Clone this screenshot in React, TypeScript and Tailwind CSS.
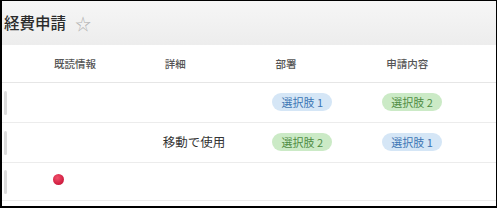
import React from "react";

const font = { fontFamily: '"Noto Sans CJK JP", "Noto Sans", sans-serif' };

function Badge({ color, label }: { color: "blue" | "green"; label: string }) {
  const cls =
    color === "blue"
      ? "bg-[#d5e6f6] text-[#3b75b3]"
      : "bg-[#cbeac6] text-[#4e8c43]";
  return (
    <span
      className={`inline-flex h-[18px] items-center rounded-full px-[9px] text-[11px] leading-none ${cls}`}
    >
      {label}
    </span>
  );
}

function Row({
  cells,
  last,
}: {
  cells: React.ReactNode[];
  last?: boolean;
}) {
  return (
    <div className={`flex items-center border-b border-[#ececec] ${last ? "h-[38px]" : "h-[40px]"}`}>
      <div className="flex w-[51px] items-center pl-[2px]">
        <div className="h-[24px] w-[3px] rounded-sm bg-[#dcdcdc]" />
      </div>
      {cells.map((c, i) => (
        <div key={i} className="flex w-[111px] items-center">
          {c}
        </div>
      ))}
    </div>
  );
}

export default function App() {
  return (
    <div
      className="box-border h-[208px] w-[497px] overflow-hidden border-b-2 border-l-2 border-r border-t border-black bg-white"
      style={font}
    >
      <div className="flex h-[44px] items-center bg-gradient-to-b from-[#f6f6f6] to-[#ededed] pl-[2px]">
        <span className="text-[15.5px] font-medium leading-none text-[#2b2b2b]">経費申請</span>
        <span className="ml-[9px] text-[16px] leading-none text-[#b4b4b4]">☆</span>
      </div>
      <div className="flex h-[38px] items-center border-b border-[#e6e6e6] text-[10.5px] font-medium text-[#555]">
        <div className="w-[51px]" />
        <div className="w-[111px] pl-[1px]">既読情報</div>
        <div className="w-[111px] pl-[1px]">詳細</div>
        <div className="w-[111px] pl-[1px]">部署</div>
        <div className="w-[111px] pl-[1px]">申請内容</div>
      </div>
      <Row
        cells={[
          null,
          null,
          <div className="-ml-[2px] mb-[6px]"><Badge color="blue" label="選択肢 1" /></div>,
          <div className="-ml-[3px] mb-[6px]"><Badge color="green" label="選択肢 2" /></div>,
        ]}
      />
      <Row
        cells={[
          null,
          <span className="-ml-[1px] text-[12.5px] text-[#333]">移動で使用</span>,
          <div className="-ml-[2px] mb-[6px]"><Badge color="green" label="選択肢 2" /></div>,
          <div className="-ml-[3px] mb-[6px]"><Badge color="blue" label="選択肢 1" /></div>,
        ]}
      />
      <Row
        last
        cells={[
          <div className="mb-[4px] h-[11px] w-[11px] rounded-full bg-[radial-gradient(circle_at_40%_35%,#f0506a,#d42245_60%,#b81a3a)]" />,
          null,
          null,
          null,
        ]}
      />
    </div>
  );
}
